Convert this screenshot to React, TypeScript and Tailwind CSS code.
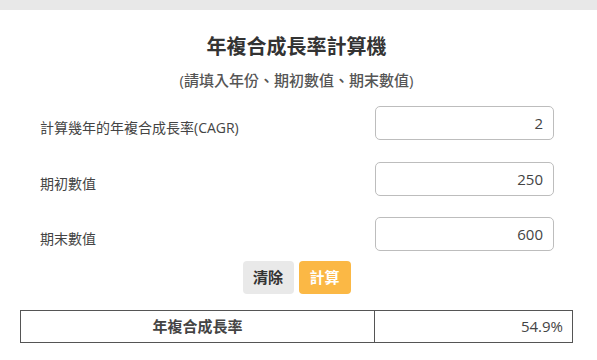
import { useState } from "react";

const FONT = { fontFamily: '"Open Sans", "Noto Sans CJK TC", sans-serif' };

function Field({ label, value, onChange, className }: { label: string; value: string; onChange: (v: string) => void; className?: string }) {
    return (
        <div className={`flex items-start ${className ?? ""}`}>
            <label className="flex-1 mt-[12px] text-[14px] leading-[20px] text-[#444]">{label}</label>
            <input
                value={value}
                onChange={(e) => onChange(e.target.value)}
                className="w-[179px] h-[34px] rounded-[5px] border border-[#bdbdbd] px-[10px] text-right text-[15px] text-[#444] outline-none"
            />
        </div>
    );
}

export default function App() {
    const [years, setYears] = useState("2");
    const [start, setStart] = useState("250");
    const [end, setEnd] = useState("600");
    const [result, setResult] = useState("54.9%");

    const calc = () => {
        const n = parseFloat(years);
        const a = parseFloat(start);
        const b = parseFloat(end);
        if (!n || !a || isNaN(b)) return setResult("");
        setResult(((Math.pow(b / a, 1 / n) - 1) * 100).toFixed(1) + "%");
    };

    const clear = () => {
        setYears("");
        setStart("");
        setEnd("");
        setResult("");
    };

    return (
        <div className="w-[597px] h-[360px] bg-white overflow-hidden" style={FONT}>
            <div className="h-[10px] bg-[#e8e8e8]" />

            <div className="pl-[20px] pr-[24px]">
                {/* Heading */}
                <h1 className="mt-[23px] text-center text-[20px] leading-[28px] font-bold text-[#333]">年複合成長率計算機</h1>
                <p className="mt-[8px] text-center text-[15px] leading-[22px] font-medium text-[#555]">(請填入年份、期初數值、期末數值)</p>

                {/* Inputs */}
                <div className="pl-[20px] pr-[19px] mt-[15px]">
                    <Field label="計算幾年的年複合成長率(CAGR)" value={years} onChange={setYears} />
                    <Field label="期初數值" value={start} onChange={setStart} className="mt-[22px]" />
                    <Field label="期末數值" value={end} onChange={setEnd} className="mt-[21px]" />
                </div>

                {/* Buttons */}
                <div className="mt-[10px] flex justify-center gap-[5px]">
                    <button onClick={clear} className="w-[51px] h-[33px] rounded-[4px] bg-[#e9e9e9] text-[15px] font-bold text-[#333]">清除</button>
                    <button onClick={calc} className="w-[52px] h-[33px] rounded-[4px] bg-[#fbb845] text-[15px] font-bold text-white">計算</button>
                </div>

                {/* Result */}
                <table className="mt-[16px] w-full border-collapse">
                    <tbody>
                        <tr className="h-[32px]">
                            <td className="w-[354px] border border-[#555] text-center text-[15px] font-bold text-[#444]">年複合成長率</td>
                            <td className="border border-[#555] pr-[9px] text-right text-[15px] text-[#444]">{result}</td>
                        </tr>
                    </tbody>
                </table>
            </div>
        </div>
    );
}
